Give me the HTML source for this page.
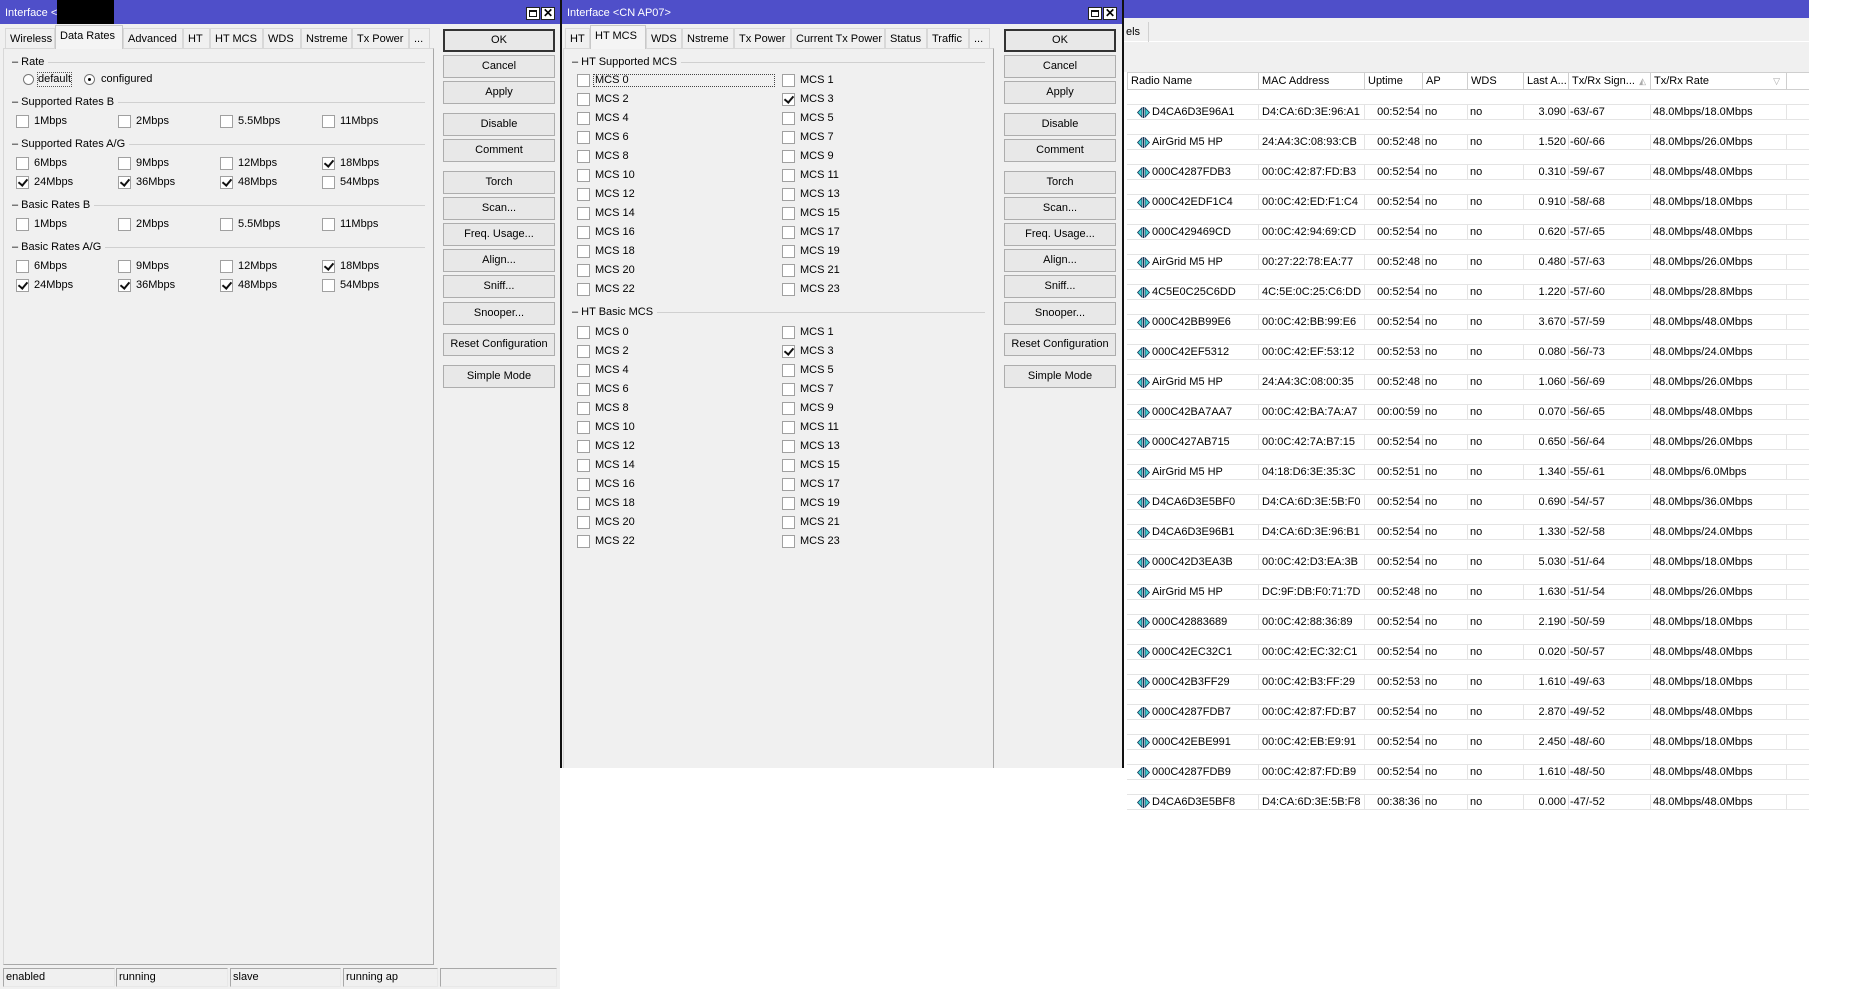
<!DOCTYPE html>
<html><head><meta charset="utf-8">
<style>
*{box-sizing:border-box;margin:0;padding:0}
body{width:1874px;height:989px;background:#fff;position:relative;overflow:hidden;font-family:"Liberation Sans",sans-serif;font-size:11px;color:#000}
.a{position:absolute}
.win{position:absolute;background:#f0f0f0;overflow:hidden}
.tb{position:absolute;left:0;right:0;top:0;height:24px;background:#4f4fc9;color:#fff;font-size:11px;line-height:26px;padding-left:5px}
.wb{position:absolute;top:7px;width:14px;height:13px;background:#fff;border:1px solid #222}
.tab{position:absolute;top:28px;height:20px;line-height:20px;padding-left:4px;border:1px solid #d8d8d8;border-bottom:none;background:#f0f0f0;white-space:nowrap}
.tab.on{top:25px;height:24px;background:#f4f4f4;border-color:#c8c8c8;z-index:2}
.panel{position:absolute;top:48px;border:1px solid #a8a8a8;border-top-color:#d8d8d8;border-left-color:#d8d8d8}
.btn{position:absolute;width:112px;height:23px;border:1px solid #adadad;background:#e8e8e8;text-align:center;line-height:21px}
.btn.def{border:2px solid #333;line-height:19px}
.gh{position:absolute;height:12px;line-height:12px;white-space:nowrap}
.gh i{position:absolute;left:0;right:0;top:6px;border-top:1px solid #d0d0d0}
.gh b{font-weight:normal;background:#f0f0f0;position:relative;padding:0 4px 0 2px}
.cb{position:absolute;width:13px;height:13px;border:1px solid #a0a0a0;background:#fff}
.cb.k::after{content:"";position:absolute;left:3px;top:0px;width:4px;height:7px;border-right:2px solid #111;border-bottom:2px solid #111;transform:rotate(40deg)}
.lb{position:absolute;white-space:nowrap;line-height:13px}
.rd{position:absolute;width:11px;height:11px;border-radius:50%;border:1px solid #777;background:#fff}
.sb{position:absolute;top:968px;height:19px;border:1px solid #a8a8a8;border-right-color:#e8e8e8;border-bottom-color:#e8e8e8;line-height:17px;padding-left:2px}
.row{position:absolute;left:1127px;width:682px;height:16px;border-top:1px solid #e4e4e4;border-bottom:1px solid #e4e4e4;background:#fff}
.row span{position:absolute;top:0;line-height:14px;white-space:nowrap}
.row i{position:absolute;top:0;height:14px;border-left:1px solid #e4e4e4}
.c1{left:25px}.c2{left:135px}.c3{right:389px}.c4{left:298px}.c5{left:343px}.c6{right:243px}.c7{left:443px}.c8{left:526px}
.ic{position:absolute;left:10px;top:2px;width:13px;height:11px}
.hd{position:absolute;top:72px;height:18px;line-height:17px;border-top:1px solid #cfcfcf;border-bottom:1px solid #cfcfcf;border-right:1px solid #cfcfcf;background:#fff;padding-left:3px;white-space:nowrap}
</style></head><body>

<!-- Window 1 -->
<div class="win" style="left:0;top:0;width:560px;height:989px">
  <div class="tb">Interface &lt;CN AP07&gt;</div>
  <div class="a" style="left:57px;top:0;width:57px;height:24px;background:#000"></div>
  <div class="wb" style="left:526px"><div class="a" style="left:2px;top:2px;width:8px;height:7px;border:1px solid #111;border-top-width:2px"></div></div>
  <div class="wb" style="left:541px;font-size:12px;line-height:11px;text-align:center;font-weight:bold">✕</div>
  <div class="tab" style="left:5px;width:50px">Wireless</div>
  <div class="tab on" style="left:55px;width:68px">Data Rates</div>
  <div class="tab" style="left:123px;width:60px">Advanced</div>
  <div class="tab" style="left:183px;width:27px">HT</div>
  <div class="tab" style="left:210px;width:53px">HT MCS</div>
  <div class="tab" style="left:263px;width:38px">WDS</div>
  <div class="tab" style="left:301px;width:51px">Nstreme</div>
  <div class="tab" style="left:352px;width:57px">Tx Power</div>
  <div class="tab" style="left:409px;width:21px">...</div>
  <div class="panel" style="left:3px;width:431px;height:917px"></div>

  <div class="gh" style="left:10px;top:56px;width:415px"><i></i><b>– Rate</b></div>
  <div class="rd" style="left:23px;top:74px"></div><div class="lb" style="left:38px;top:73px;outline:1px dotted #555">default</div>
  <div class="rd" style="left:84px;top:74px"><div class="a" style="left:3px;top:3px;width:3px;height:3px;background:#000;border-radius:50%"></div></div><div class="lb" style="left:101px;top:73px">configured</div>

  <div class="gh" style="left:10px;top:96px;width:415px"><i></i><b>– Supported Rates B</b></div>
  <div class="gh" style="left:10px;top:138px;width:415px"><i></i><b>– Supported Rates A/G</b></div>
  <div class="gh" style="left:10px;top:199px;width:415px"><i></i><b>– Basic Rates B</b></div>
  <div class="gh" style="left:10px;top:241px;width:415px"><i></i><b>– Basic Rates A/G</b></div>

  <div class="cb" style="left:16px;top:115px"></div><div class="lb" style="left:34px;top:115px">1Mbps</div>
  <div class="cb" style="left:118px;top:115px"></div><div class="lb" style="left:136px;top:115px">2Mbps</div>
  <div class="cb" style="left:220px;top:115px"></div><div class="lb" style="left:238px;top:115px">5.5Mbps</div>
  <div class="cb" style="left:322px;top:115px"></div><div class="lb" style="left:340px;top:115px">11Mbps</div>

  <div class="cb" style="left:16px;top:157px"></div><div class="lb" style="left:34px;top:157px">6Mbps</div>
  <div class="cb" style="left:118px;top:157px"></div><div class="lb" style="left:136px;top:157px">9Mbps</div>
  <div class="cb" style="left:220px;top:157px"></div><div class="lb" style="left:238px;top:157px">12Mbps</div>
  <div class="cb k" style="left:322px;top:157px"></div><div class="lb" style="left:340px;top:157px">18Mbps</div>
  <div class="cb k" style="left:16px;top:176px"></div><div class="lb" style="left:34px;top:176px">24Mbps</div>
  <div class="cb k" style="left:118px;top:176px"></div><div class="lb" style="left:136px;top:176px">36Mbps</div>
  <div class="cb k" style="left:220px;top:176px"></div><div class="lb" style="left:238px;top:176px">48Mbps</div>
  <div class="cb" style="left:322px;top:176px"></div><div class="lb" style="left:340px;top:176px">54Mbps</div>

  <div class="cb" style="left:16px;top:218px"></div><div class="lb" style="left:34px;top:218px">1Mbps</div>
  <div class="cb" style="left:118px;top:218px"></div><div class="lb" style="left:136px;top:218px">2Mbps</div>
  <div class="cb" style="left:220px;top:218px"></div><div class="lb" style="left:238px;top:218px">5.5Mbps</div>
  <div class="cb" style="left:322px;top:218px"></div><div class="lb" style="left:340px;top:218px">11Mbps</div>

  <div class="cb" style="left:16px;top:260px"></div><div class="lb" style="left:34px;top:260px">6Mbps</div>
  <div class="cb" style="left:118px;top:260px"></div><div class="lb" style="left:136px;top:260px">9Mbps</div>
  <div class="cb" style="left:220px;top:260px"></div><div class="lb" style="left:238px;top:260px">12Mbps</div>
  <div class="cb k" style="left:322px;top:260px"></div><div class="lb" style="left:340px;top:260px">18Mbps</div>
  <div class="cb k" style="left:16px;top:279px"></div><div class="lb" style="left:34px;top:279px">24Mbps</div>
  <div class="cb k" style="left:118px;top:279px"></div><div class="lb" style="left:136px;top:279px">36Mbps</div>
  <div class="cb k" style="left:220px;top:279px"></div><div class="lb" style="left:238px;top:279px">48Mbps</div>
  <div class="cb" style="left:322px;top:279px"></div><div class="lb" style="left:340px;top:279px">54Mbps</div>

  <div class="btn def" style="left:443px;top:29px">OK</div>
  <div class="btn" style="left:443px;top:55px">Cancel</div>
  <div class="btn" style="left:443px;top:81px">Apply</div>
  <div class="btn" style="left:443px;top:113px">Disable</div>
  <div class="btn" style="left:443px;top:139px">Comment</div>
  <div class="btn" style="left:443px;top:171px">Torch</div>
  <div class="btn" style="left:443px;top:197px">Scan...</div>
  <div class="btn" style="left:443px;top:223px">Freq. Usage...</div>
  <div class="btn" style="left:443px;top:249px">Align...</div>
  <div class="btn" style="left:443px;top:275px">Sniff...</div>
  <div class="btn" style="left:443px;top:302px">Snooper...</div>
  <div class="btn" style="left:443px;top:333px">Reset Configuration</div>
  <div class="btn" style="left:443px;top:365px">Simple Mode</div>

  <div class="sb" style="left:3px;width:112px">enabled</div>
  <div class="sb" style="left:116px;width:112px">running</div>
  <div class="sb" style="left:230px;width:111px">slave</div>
  <div class="sb" style="left:343px;width:95px">running ap</div>
  <div class="sb" style="left:440px;width:117px"></div>
</div>

<!-- Window 2 -->
<div class="win" style="left:560px;top:0;width:564px;height:768px;border-left:2px solid #111;border-right:2px solid #111">
  <div class="tb">Interface &lt;CN AP07&gt;</div>
  <div class="wb" style="left:526px"><div class="a" style="left:2px;top:2px;width:8px;height:7px;border:1px solid #111;border-top-width:2px"></div></div>
  <div class="wb" style="left:541px;font-size:12px;line-height:11px;text-align:center;font-weight:bold">✕</div>
  <div class="tab" style="left:3px;width:25px">HT</div>
  <div class="tab on" style="left:28px;width:56px">HT MCS</div>
  <div class="tab" style="left:84px;width:36px">WDS</div>
  <div class="tab" style="left:120px;width:52px">Nstreme</div>
  <div class="tab" style="left:172px;width:57px">Tx Power</div>
  <div class="tab" style="left:229px;width:94px">Current Tx Power</div>
  <div class="tab" style="left:323px;width:42px">Status</div>
  <div class="tab" style="left:365px;width:42px">Traffic</div>
  <div class="tab" style="left:407px;width:21px">...</div>
  <div class="panel" style="left:1px;width:431px;height:730px;border-bottom:none"></div>
  <div class="gh" style="left:8px;top:56px;width:415px"><i></i><b>– HT Supported MCS</b></div>
  <div class="gh" style="left:8px;top:306px;width:415px"><i></i><b>– HT Basic MCS</b></div>
  <div class="a" style="left:31px;top:74px;width:182px;height:13px;border:1px dotted #444"></div>

  <div class="cb" style="left:15px;top:74px"></div><div class="lb" style="left:33px;top:74px">MCS 0</div><div class="cb" style="left:220px;top:74px"></div><div class="lb" style="left:238px;top:74px">MCS 1</div>
  <div class="cb" style="left:15px;top:93px"></div><div class="lb" style="left:33px;top:93px">MCS 2</div><div class="cb k" style="left:220px;top:93px"></div><div class="lb" style="left:238px;top:93px">MCS 3</div>
  <div class="cb" style="left:15px;top:112px"></div><div class="lb" style="left:33px;top:112px">MCS 4</div><div class="cb" style="left:220px;top:112px"></div><div class="lb" style="left:238px;top:112px">MCS 5</div>
  <div class="cb" style="left:15px;top:131px"></div><div class="lb" style="left:33px;top:131px">MCS 6</div><div class="cb" style="left:220px;top:131px"></div><div class="lb" style="left:238px;top:131px">MCS 7</div>
  <div class="cb" style="left:15px;top:150px"></div><div class="lb" style="left:33px;top:150px">MCS 8</div><div class="cb" style="left:220px;top:150px"></div><div class="lb" style="left:238px;top:150px">MCS 9</div>
  <div class="cb" style="left:15px;top:169px"></div><div class="lb" style="left:33px;top:169px">MCS 10</div><div class="cb" style="left:220px;top:169px"></div><div class="lb" style="left:238px;top:169px">MCS 11</div>
  <div class="cb" style="left:15px;top:188px"></div><div class="lb" style="left:33px;top:188px">MCS 12</div><div class="cb" style="left:220px;top:188px"></div><div class="lb" style="left:238px;top:188px">MCS 13</div>
  <div class="cb" style="left:15px;top:207px"></div><div class="lb" style="left:33px;top:207px">MCS 14</div><div class="cb" style="left:220px;top:207px"></div><div class="lb" style="left:238px;top:207px">MCS 15</div>
  <div class="cb" style="left:15px;top:226px"></div><div class="lb" style="left:33px;top:226px">MCS 16</div><div class="cb" style="left:220px;top:226px"></div><div class="lb" style="left:238px;top:226px">MCS 17</div>
  <div class="cb" style="left:15px;top:245px"></div><div class="lb" style="left:33px;top:245px">MCS 18</div><div class="cb" style="left:220px;top:245px"></div><div class="lb" style="left:238px;top:245px">MCS 19</div>
  <div class="cb" style="left:15px;top:264px"></div><div class="lb" style="left:33px;top:264px">MCS 20</div><div class="cb" style="left:220px;top:264px"></div><div class="lb" style="left:238px;top:264px">MCS 21</div>
  <div class="cb" style="left:15px;top:283px"></div><div class="lb" style="left:33px;top:283px">MCS 22</div><div class="cb" style="left:220px;top:283px"></div><div class="lb" style="left:238px;top:283px">MCS 23</div>

  <div class="cb" style="left:15px;top:326px"></div><div class="lb" style="left:33px;top:326px">MCS 0</div><div class="cb" style="left:220px;top:326px"></div><div class="lb" style="left:238px;top:326px">MCS 1</div>
  <div class="cb" style="left:15px;top:345px"></div><div class="lb" style="left:33px;top:345px">MCS 2</div><div class="cb k" style="left:220px;top:345px"></div><div class="lb" style="left:238px;top:345px">MCS 3</div>
  <div class="cb" style="left:15px;top:364px"></div><div class="lb" style="left:33px;top:364px">MCS 4</div><div class="cb" style="left:220px;top:364px"></div><div class="lb" style="left:238px;top:364px">MCS 5</div>
  <div class="cb" style="left:15px;top:383px"></div><div class="lb" style="left:33px;top:383px">MCS 6</div><div class="cb" style="left:220px;top:383px"></div><div class="lb" style="left:238px;top:383px">MCS 7</div>
  <div class="cb" style="left:15px;top:402px"></div><div class="lb" style="left:33px;top:402px">MCS 8</div><div class="cb" style="left:220px;top:402px"></div><div class="lb" style="left:238px;top:402px">MCS 9</div>
  <div class="cb" style="left:15px;top:421px"></div><div class="lb" style="left:33px;top:421px">MCS 10</div><div class="cb" style="left:220px;top:421px"></div><div class="lb" style="left:238px;top:421px">MCS 11</div>
  <div class="cb" style="left:15px;top:440px"></div><div class="lb" style="left:33px;top:440px">MCS 12</div><div class="cb" style="left:220px;top:440px"></div><div class="lb" style="left:238px;top:440px">MCS 13</div>
  <div class="cb" style="left:15px;top:459px"></div><div class="lb" style="left:33px;top:459px">MCS 14</div><div class="cb" style="left:220px;top:459px"></div><div class="lb" style="left:238px;top:459px">MCS 15</div>
  <div class="cb" style="left:15px;top:478px"></div><div class="lb" style="left:33px;top:478px">MCS 16</div><div class="cb" style="left:220px;top:478px"></div><div class="lb" style="left:238px;top:478px">MCS 17</div>
  <div class="cb" style="left:15px;top:497px"></div><div class="lb" style="left:33px;top:497px">MCS 18</div><div class="cb" style="left:220px;top:497px"></div><div class="lb" style="left:238px;top:497px">MCS 19</div>
  <div class="cb" style="left:15px;top:516px"></div><div class="lb" style="left:33px;top:516px">MCS 20</div><div class="cb" style="left:220px;top:516px"></div><div class="lb" style="left:238px;top:516px">MCS 21</div>
  <div class="cb" style="left:15px;top:535px"></div><div class="lb" style="left:33px;top:535px">MCS 22</div><div class="cb" style="left:220px;top:535px"></div><div class="lb" style="left:238px;top:535px">MCS 23</div>

  <div class="btn def" style="left:442px;top:29px">OK</div>
  <div class="btn" style="left:442px;top:55px">Cancel</div>
  <div class="btn" style="left:442px;top:81px">Apply</div>
  <div class="btn" style="left:442px;top:113px">Disable</div>
  <div class="btn" style="left:442px;top:139px">Comment</div>
  <div class="btn" style="left:442px;top:171px">Torch</div>
  <div class="btn" style="left:442px;top:197px">Scan...</div>
  <div class="btn" style="left:442px;top:223px">Freq. Usage...</div>
  <div class="btn" style="left:442px;top:249px">Align...</div>
  <div class="btn" style="left:442px;top:275px">Sniff...</div>
  <div class="btn" style="left:442px;top:302px">Snooper...</div>
  <div class="btn" style="left:442px;top:333px">Reset Configuration</div>
  <div class="btn" style="left:442px;top:365px">Simple Mode</div>
</div>

<!-- Window 3 (table) -->
<div class="a" style="left:1124px;top:0;width:685px;height:18px;background:#4f4fc9"></div>
<div class="a" style="left:1124px;top:18px;width:685px;height:54px;background:#f0f0f0"></div>
<div class="a" style="left:1124px;top:41px;width:685px;border-top:1px solid #fff"></div>
<div class="a" style="left:1124px;top:22px;width:25px;height:20px;border-right:1px solid #d0d0d0;line-height:20px;padding-left:2px">els</div>
<div class="hd" style="left:1127px;width:132px;border-left:1px solid #cfcfcf">Radio Name</div>
<div class="hd" style="left:1259px;width:106px">MAC Address</div>
<div class="hd" style="left:1365px;width:58px">Uptime</div>
<div class="hd" style="left:1423px;width:45px">AP</div>
<div class="hd" style="left:1468px;width:56px">WDS</div>
<div class="hd" style="left:1524px;width:45px">Last A...</div>
<div class="hd" style="left:1569px;width:82px">Tx/Rx Sign... <span style="color:#aaa;float:right;margin-right:4px;font-size:9px">◭</span></div>
<div class="hd" style="left:1651px;width:136px">Tx/Rx Rate<span style="color:#aaa;float:right;margin-right:6px;font-size:9px">▽</span></div>
<div class="hd" style="left:1787px;width:22px;border-right:none"></div>

<svg width="0" height="0" style="position:absolute"><defs><symbol id="ic" viewBox="0 0 13 11"><path d="M0.5 5.5 L5 0.8 L5 10.2 Z M12.5 5.5 L8 0.8 L8 10.2 Z" fill="#3fd0d0" stroke="#135" stroke-width="0.8"/><path d="M6.5 0 V11" stroke="#135" stroke-width="1"/></symbol></defs></svg>

<div class="row" style="top:104px"><svg class="ic"><use href="#ic"/></svg><span class="c1">D4CA6D3E96A1</span><i style="left:131px"></i><span class="c2">D4:CA:6D:3E:96:A1</span><i style="left:237px"></i><span class="c3">00:52:54</span><i style="left:295px"></i><span class="c4">no</span><i style="left:340px"></i><span class="c5">no</span><i style="left:396px"></i><span class="c6">3.090</span><i style="left:441px"></i><span class="c7">-63/-67</span><i style="left:523px"></i><span class="c8">48.0Mbps/18.0Mbps</span><i style="left:659px"></i></div>
<div class="row" style="top:134px"><svg class="ic"><use href="#ic"/></svg><span class="c1">AirGrid M5 HP</span><i style="left:131px"></i><span class="c2">24:A4:3C:08:93:CB</span><i style="left:237px"></i><span class="c3">00:52:48</span><i style="left:295px"></i><span class="c4">no</span><i style="left:340px"></i><span class="c5">no</span><i style="left:396px"></i><span class="c6">1.520</span><i style="left:441px"></i><span class="c7">-60/-66</span><i style="left:523px"></i><span class="c8">48.0Mbps/26.0Mbps</span><i style="left:659px"></i></div>
<div class="row" style="top:164px"><svg class="ic"><use href="#ic"/></svg><span class="c1">000C4287FDB3</span><i style="left:131px"></i><span class="c2">00:0C:42:87:FD:B3</span><i style="left:237px"></i><span class="c3">00:52:54</span><i style="left:295px"></i><span class="c4">no</span><i style="left:340px"></i><span class="c5">no</span><i style="left:396px"></i><span class="c6">0.310</span><i style="left:441px"></i><span class="c7">-59/-67</span><i style="left:523px"></i><span class="c8">48.0Mbps/48.0Mbps</span><i style="left:659px"></i></div>
<div class="row" style="top:194px"><svg class="ic"><use href="#ic"/></svg><span class="c1">000C42EDF1C4</span><i style="left:131px"></i><span class="c2">00:0C:42:ED:F1:C4</span><i style="left:237px"></i><span class="c3">00:52:54</span><i style="left:295px"></i><span class="c4">no</span><i style="left:340px"></i><span class="c5">no</span><i style="left:396px"></i><span class="c6">0.910</span><i style="left:441px"></i><span class="c7">-58/-68</span><i style="left:523px"></i><span class="c8">48.0Mbps/18.0Mbps</span><i style="left:659px"></i></div>
<div class="row" style="top:224px"><svg class="ic"><use href="#ic"/></svg><span class="c1">000C429469CD</span><i style="left:131px"></i><span class="c2">00:0C:42:94:69:CD</span><i style="left:237px"></i><span class="c3">00:52:54</span><i style="left:295px"></i><span class="c4">no</span><i style="left:340px"></i><span class="c5">no</span><i style="left:396px"></i><span class="c6">0.620</span><i style="left:441px"></i><span class="c7">-57/-65</span><i style="left:523px"></i><span class="c8">48.0Mbps/48.0Mbps</span><i style="left:659px"></i></div>
<div class="row" style="top:254px"><svg class="ic"><use href="#ic"/></svg><span class="c1">AirGrid M5 HP</span><i style="left:131px"></i><span class="c2">00:27:22:78:EA:77</span><i style="left:237px"></i><span class="c3">00:52:48</span><i style="left:295px"></i><span class="c4">no</span><i style="left:340px"></i><span class="c5">no</span><i style="left:396px"></i><span class="c6">0.480</span><i style="left:441px"></i><span class="c7">-57/-63</span><i style="left:523px"></i><span class="c8">48.0Mbps/26.0Mbps</span><i style="left:659px"></i></div>
<div class="row" style="top:284px"><svg class="ic"><use href="#ic"/></svg><span class="c1">4C5E0C25C6DD</span><i style="left:131px"></i><span class="c2">4C:5E:0C:25:C6:DD</span><i style="left:237px"></i><span class="c3">00:52:54</span><i style="left:295px"></i><span class="c4">no</span><i style="left:340px"></i><span class="c5">no</span><i style="left:396px"></i><span class="c6">1.220</span><i style="left:441px"></i><span class="c7">-57/-60</span><i style="left:523px"></i><span class="c8">48.0Mbps/28.8Mbps</span><i style="left:659px"></i></div>
<div class="row" style="top:314px"><svg class="ic"><use href="#ic"/></svg><span class="c1">000C42BB99E6</span><i style="left:131px"></i><span class="c2">00:0C:42:BB:99:E6</span><i style="left:237px"></i><span class="c3">00:52:54</span><i style="left:295px"></i><span class="c4">no</span><i style="left:340px"></i><span class="c5">no</span><i style="left:396px"></i><span class="c6">3.670</span><i style="left:441px"></i><span class="c7">-57/-59</span><i style="left:523px"></i><span class="c8">48.0Mbps/48.0Mbps</span><i style="left:659px"></i></div>
<div class="row" style="top:344px"><svg class="ic"><use href="#ic"/></svg><span class="c1">000C42EF5312</span><i style="left:131px"></i><span class="c2">00:0C:42:EF:53:12</span><i style="left:237px"></i><span class="c3">00:52:53</span><i style="left:295px"></i><span class="c4">no</span><i style="left:340px"></i><span class="c5">no</span><i style="left:396px"></i><span class="c6">0.080</span><i style="left:441px"></i><span class="c7">-56/-73</span><i style="left:523px"></i><span class="c8">48.0Mbps/24.0Mbps</span><i style="left:659px"></i></div>
<div class="row" style="top:374px"><svg class="ic"><use href="#ic"/></svg><span class="c1">AirGrid M5 HP</span><i style="left:131px"></i><span class="c2">24:A4:3C:08:00:35</span><i style="left:237px"></i><span class="c3">00:52:48</span><i style="left:295px"></i><span class="c4">no</span><i style="left:340px"></i><span class="c5">no</span><i style="left:396px"></i><span class="c6">1.060</span><i style="left:441px"></i><span class="c7">-56/-69</span><i style="left:523px"></i><span class="c8">48.0Mbps/26.0Mbps</span><i style="left:659px"></i></div>
<div class="row" style="top:404px"><svg class="ic"><use href="#ic"/></svg><span class="c1">000C42BA7AA7</span><i style="left:131px"></i><span class="c2">00:0C:42:BA:7A:A7</span><i style="left:237px"></i><span class="c3">00:00:59</span><i style="left:295px"></i><span class="c4">no</span><i style="left:340px"></i><span class="c5">no</span><i style="left:396px"></i><span class="c6">0.070</span><i style="left:441px"></i><span class="c7">-56/-65</span><i style="left:523px"></i><span class="c8">48.0Mbps/48.0Mbps</span><i style="left:659px"></i></div>
<div class="row" style="top:434px"><svg class="ic"><use href="#ic"/></svg><span class="c1">000C427AB715</span><i style="left:131px"></i><span class="c2">00:0C:42:7A:B7:15</span><i style="left:237px"></i><span class="c3">00:52:54</span><i style="left:295px"></i><span class="c4">no</span><i style="left:340px"></i><span class="c5">no</span><i style="left:396px"></i><span class="c6">0.650</span><i style="left:441px"></i><span class="c7">-56/-64</span><i style="left:523px"></i><span class="c8">48.0Mbps/26.0Mbps</span><i style="left:659px"></i></div>
<div class="row" style="top:464px"><svg class="ic"><use href="#ic"/></svg><span class="c1">AirGrid M5 HP</span><i style="left:131px"></i><span class="c2">04:18:D6:3E:35:3C</span><i style="left:237px"></i><span class="c3">00:52:51</span><i style="left:295px"></i><span class="c4">no</span><i style="left:340px"></i><span class="c5">no</span><i style="left:396px"></i><span class="c6">1.340</span><i style="left:441px"></i><span class="c7">-55/-61</span><i style="left:523px"></i><span class="c8">48.0Mbps/6.0Mbps</span><i style="left:659px"></i></div>
<div class="row" style="top:494px"><svg class="ic"><use href="#ic"/></svg><span class="c1">D4CA6D3E5BF0</span><i style="left:131px"></i><span class="c2">D4:CA:6D:3E:5B:F0</span><i style="left:237px"></i><span class="c3">00:52:54</span><i style="left:295px"></i><span class="c4">no</span><i style="left:340px"></i><span class="c5">no</span><i style="left:396px"></i><span class="c6">0.690</span><i style="left:441px"></i><span class="c7">-54/-57</span><i style="left:523px"></i><span class="c8">48.0Mbps/36.0Mbps</span><i style="left:659px"></i></div>
<div class="row" style="top:524px"><svg class="ic"><use href="#ic"/></svg><span class="c1">D4CA6D3E96B1</span><i style="left:131px"></i><span class="c2">D4:CA:6D:3E:96:B1</span><i style="left:237px"></i><span class="c3">00:52:54</span><i style="left:295px"></i><span class="c4">no</span><i style="left:340px"></i><span class="c5">no</span><i style="left:396px"></i><span class="c6">1.330</span><i style="left:441px"></i><span class="c7">-52/-58</span><i style="left:523px"></i><span class="c8">48.0Mbps/24.0Mbps</span><i style="left:659px"></i></div>
<div class="row" style="top:554px"><svg class="ic"><use href="#ic"/></svg><span class="c1">000C42D3EA3B</span><i style="left:131px"></i><span class="c2">00:0C:42:D3:EA:3B</span><i style="left:237px"></i><span class="c3">00:52:54</span><i style="left:295px"></i><span class="c4">no</span><i style="left:340px"></i><span class="c5">no</span><i style="left:396px"></i><span class="c6">5.030</span><i style="left:441px"></i><span class="c7">-51/-64</span><i style="left:523px"></i><span class="c8">48.0Mbps/18.0Mbps</span><i style="left:659px"></i></div>
<div class="row" style="top:584px"><svg class="ic"><use href="#ic"/></svg><span class="c1">AirGrid M5 HP</span><i style="left:131px"></i><span class="c2">DC:9F:DB:F0:71:7D</span><i style="left:237px"></i><span class="c3">00:52:48</span><i style="left:295px"></i><span class="c4">no</span><i style="left:340px"></i><span class="c5">no</span><i style="left:396px"></i><span class="c6">1.630</span><i style="left:441px"></i><span class="c7">-51/-54</span><i style="left:523px"></i><span class="c8">48.0Mbps/26.0Mbps</span><i style="left:659px"></i></div>
<div class="row" style="top:614px"><svg class="ic"><use href="#ic"/></svg><span class="c1">000C42883689</span><i style="left:131px"></i><span class="c2">00:0C:42:88:36:89</span><i style="left:237px"></i><span class="c3">00:52:54</span><i style="left:295px"></i><span class="c4">no</span><i style="left:340px"></i><span class="c5">no</span><i style="left:396px"></i><span class="c6">2.190</span><i style="left:441px"></i><span class="c7">-50/-59</span><i style="left:523px"></i><span class="c8">48.0Mbps/18.0Mbps</span><i style="left:659px"></i></div>
<div class="row" style="top:644px"><svg class="ic"><use href="#ic"/></svg><span class="c1">000C42EC32C1</span><i style="left:131px"></i><span class="c2">00:0C:42:EC:32:C1</span><i style="left:237px"></i><span class="c3">00:52:54</span><i style="left:295px"></i><span class="c4">no</span><i style="left:340px"></i><span class="c5">no</span><i style="left:396px"></i><span class="c6">0.020</span><i style="left:441px"></i><span class="c7">-50/-57</span><i style="left:523px"></i><span class="c8">48.0Mbps/48.0Mbps</span><i style="left:659px"></i></div>
<div class="row" style="top:674px"><svg class="ic"><use href="#ic"/></svg><span class="c1">000C42B3FF29</span><i style="left:131px"></i><span class="c2">00:0C:42:B3:FF:29</span><i style="left:237px"></i><span class="c3">00:52:53</span><i style="left:295px"></i><span class="c4">no</span><i style="left:340px"></i><span class="c5">no</span><i style="left:396px"></i><span class="c6">1.610</span><i style="left:441px"></i><span class="c7">-49/-63</span><i style="left:523px"></i><span class="c8">48.0Mbps/18.0Mbps</span><i style="left:659px"></i></div>
<div class="row" style="top:704px"><svg class="ic"><use href="#ic"/></svg><span class="c1">000C4287FDB7</span><i style="left:131px"></i><span class="c2">00:0C:42:87:FD:B7</span><i style="left:237px"></i><span class="c3">00:52:54</span><i style="left:295px"></i><span class="c4">no</span><i style="left:340px"></i><span class="c5">no</span><i style="left:396px"></i><span class="c6">2.870</span><i style="left:441px"></i><span class="c7">-49/-52</span><i style="left:523px"></i><span class="c8">48.0Mbps/48.0Mbps</span><i style="left:659px"></i></div>
<div class="row" style="top:734px"><svg class="ic"><use href="#ic"/></svg><span class="c1">000C42EBE991</span><i style="left:131px"></i><span class="c2">00:0C:42:EB:E9:91</span><i style="left:237px"></i><span class="c3">00:52:54</span><i style="left:295px"></i><span class="c4">no</span><i style="left:340px"></i><span class="c5">no</span><i style="left:396px"></i><span class="c6">2.450</span><i style="left:441px"></i><span class="c7">-48/-60</span><i style="left:523px"></i><span class="c8">48.0Mbps/18.0Mbps</span><i style="left:659px"></i></div>
<div class="row" style="top:764px"><svg class="ic"><use href="#ic"/></svg><span class="c1">000C4287FDB9</span><i style="left:131px"></i><span class="c2">00:0C:42:87:FD:B9</span><i style="left:237px"></i><span class="c3">00:52:54</span><i style="left:295px"></i><span class="c4">no</span><i style="left:340px"></i><span class="c5">no</span><i style="left:396px"></i><span class="c6">1.610</span><i style="left:441px"></i><span class="c7">-48/-50</span><i style="left:523px"></i><span class="c8">48.0Mbps/48.0Mbps</span><i style="left:659px"></i></div>
<div class="row" style="top:794px"><svg class="ic"><use href="#ic"/></svg><span class="c1">D4CA6D3E5BF8</span><i style="left:131px"></i><span class="c2">D4:CA:6D:3E:5B:F8</span><i style="left:237px"></i><span class="c3">00:38:36</span><i style="left:295px"></i><span class="c4">no</span><i style="left:340px"></i><span class="c5">no</span><i style="left:396px"></i><span class="c6">0.000</span><i style="left:441px"></i><span class="c7">-47/-52</span><i style="left:523px"></i><span class="c8">48.0Mbps/48.0Mbps</span><i style="left:659px"></i></div>

</body></html>
